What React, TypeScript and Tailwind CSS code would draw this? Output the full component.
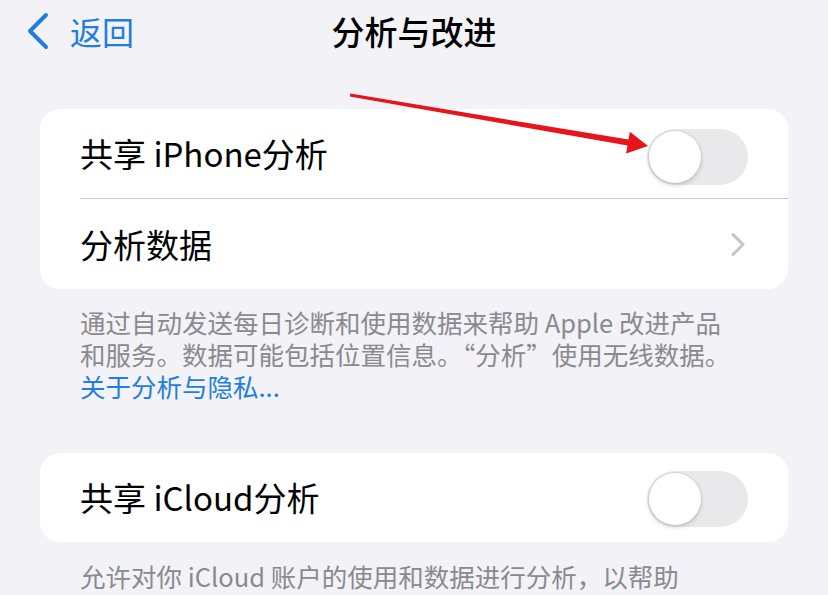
import React from 'react';

const Toggle: React.FC<{ className?: string }> = ({ className = "" }) => (
    <div className={`relative w-[101px] h-[56px] rounded-full bg-[#e9e9eb] ${className}`}>
        <div className="absolute left-[2px] top-[2px] w-[52px] h-[52px] rounded-full bg-white shadow-[0_2px_5px_rgba(0,0,0,0.18),0_0_0_1px_rgba(0,0,0,0.05)]" />
    </div>
);

const ChevronRight = () => (
    <svg width="16" height="25" viewBox="0 0 16 25" fill="none">
        <path d="M3 2.5 L13 12.5 L3 22.5" stroke="#c4c4c8" strokeWidth="3" strokeLinecap="round" strokeLinejoin="round" />
    </svg>
);

export default function App() {
    return (
        <div
            className="relative w-[828px] h-[595px] overflow-hidden bg-[#f2f2f7] text-black"
            style={{ fontFamily: '"Noto Sans CJK SC", "Noto Sans", sans-serif' }}
        >
            {/* nav bar */}
            <div className="grid grid-cols-[1fr_auto_1fr] items-center h-[62px] px-[26px]">
                <div className="flex items-center gap-[20px] text-[#1f7ee0]">
                    <svg width="24" height="38" viewBox="0 0 24 38" fill="none">
                        <path d="M20 3 L4 19 L20 35" stroke="#1f7ee0" strokeWidth="4" strokeLinecap="round" strokeLinejoin="round" />
                    </svg>
                    <span className="text-[32px] leading-none">返回</span>
                </div>
                <div className="text-[33px] font-medium leading-none">分析与改进</div>
                <div />
            </div>

            <div className="px-[40px] pt-[47px]">
                <div className="rounded-[20px] bg-white">
                    <div className="flex items-center justify-between h-[89px] pl-[40px] pr-[40px]">
                        <span className="text-[33px] leading-none">共享 iPhone分析</span>
                        <Toggle className="mt-[6px]" />
                    </div>
                    <div className="ml-[40px] h-px bg-[#c8c8cc]" />
                    <div className="flex items-center justify-between h-[90px] pl-[40px] pr-[42px]">
                        <span className="text-[33px] leading-none">分析数据</span>
                        <ChevronRight />
                    </div>
                </div>

                <div className="flex flex-col px-[40px] pt-[17px] text-[25.5px] leading-[32px] text-[#8a8a8e] whitespace-nowrap">
                    <div className="h-[32px]">通过自动发送每日诊断和使用数据来帮助 Apple 改进产品</div>
                    <div className="h-[32px]">和服务。数据可能包括位置信息。“分析”使用无线数据。</div>
                    <div className="h-[32px] text-[#1f7ee0]">关于分析与隐私...</div>
                </div>

                <div className="mt-[51px] rounded-[20px] bg-white">
                    <div className="flex items-center justify-between h-[89px] pl-[40px] pr-[40px]">
                        <span className="text-[33px] leading-none">共享 iCloud分析</span>
                        <Toggle className="mt-[2px]" />
                    </div>
                </div>

                <div className="px-[40px] pt-[18px] text-[25.5px] leading-[32px] text-[#8a8a8e] whitespace-nowrap">
                    <div>允许对你 iCloud 账户的使用和数据进行分析，以帮助</div>
                </div>
            </div>

            {/* red annotation arrow */}
            <svg className="absolute inset-0 pointer-events-none" width="828" height="595" viewBox="0 0 828 595">
                <polygon
                    points="350.3,93.5 628.5,139.6 629.9,131.8 648,146 626.1,153.4 627.5,145.6 349.7,96.5"
                    fill="#e8141b"
                />
            </svg>
        </div>
    );
}
